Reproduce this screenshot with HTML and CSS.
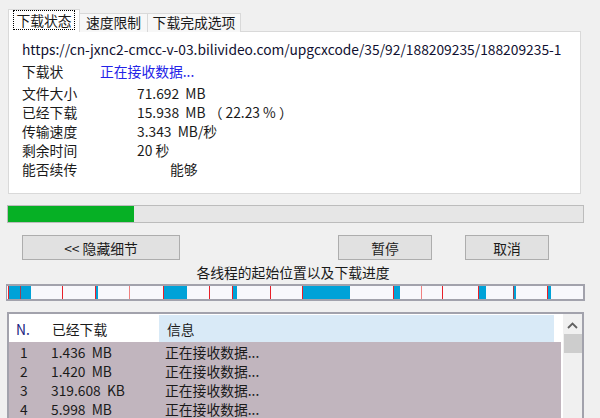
FILE: index.html
```html
<!DOCTYPE html>
<html>
<head>
<meta charset="utf-8">
<link rel="stylesheet" href="styles.css">
</head>
<body>
<div class="win">
  <div class="tabs">
    <div class="tab active"><span class="focus">下载状态</span></div>
    <div class="tab t2">速度限制</div>
    <div class="tab t3">下载完成选项</div>
  </div>
  <div class="panel">
    <div class="url">https://cn-jxnc2-cmcc-v-03.bilivideo.com/upgcxcode/35/92/188209235/188209235-1</div>
    <div class="status"><span class="k">下载状</span><span class="blue">正在接收数据...</span></div>
    <div class="info">
      <div class="row"><span class="k2">文件大小</span><span class="v">71.692  MB</span></div>
      <div class="row"><span class="k2">已经下载</span><span class="v">15.938  MB （ 22.23 % ）</span></div>
      <div class="row"><span class="k2">传输速度</span><span class="v">3.343  MB/秒</span></div>
      <div class="row"><span class="k2">剩余时间</span><span class="v">20 秒</span></div>
      <div class="row"><span class="k2">能否续传</span><span class="v resume">能够</span></div>
    </div>
  </div>
  <div class="progress"><div class="fill"></div></div>
  <div class="buttons">
    <button class="btn hide">&lt;&lt; 隐藏细节</button>
    <button class="btn pause">暂停</button>
    <button class="btn cancel">取消</button>
  </div>
  <div class="caption">各线程的起始位置以及下载进度</div>
  <div class="threads">
    <i class="seg" style="left:1px;width:23px"></i>
    <i class="seg" style="left:89px;width:2px"></i>
    <i class="seg" style="left:157px;width:23px"></i>
    <i class="seg" style="left:226px;width:4px"></i>
    <i class="seg" style="left:295px;width:48px"></i>
    <i class="seg" style="left:386px;width:7px"></i>
    <i class="seg" style="left:472px;width:7px"></i>
    <i class="seg" style="left:507px;width:2px"></i>
    <i class="seg" style="left:541px;width:3px"></i>
    <i class="mark" style="left:1px"></i>
    <i class="mark dark" style="left:13px"></i>
    <i class="mark" style="left:55px"></i>
    <i class="mark" style="left:88px"></i>
    <i class="mark light" style="left:122px"></i>
    <i class="mark" style="left:156px"></i>
    <i class="mark" style="left:202px"></i>
    <i class="mark" style="left:225px"></i>
    <i class="mark" style="left:263px"></i>
    <i class="mark" style="left:295px"></i>
    <i class="mark" style="left:386px"></i>
    <i class="mark light" style="left:414px"></i>
    <i class="mark" style="left:435px"></i>
    <i class="mark" style="left:471px"></i>
    <i class="mark dark" style="left:506px"></i>
    <i class="mark" style="left:540px"></i>
  </div>
  <div class="list">
    <div class="grid">
      <div class="head">
        <div class="c1 hn">N.</div>
        <div class="c2">已经下载</div>
        <div class="c3 hinfo">信息</div>
      </div>
      <div class="body">
        <div class="r"><div class="c1">1</div><div class="c2">1.436  MB</div><div class="c3">正在接收数据...</div></div>
        <div class="r"><div class="c1">2</div><div class="c2">1.420  MB</div><div class="c3">正在接收数据...</div></div>
        <div class="r"><div class="c1">3</div><div class="c2">319.608  KB</div><div class="c3">正在接收数据...</div></div>
        <div class="r"><div class="c1">4</div><div class="c2">5.998  MB</div><div class="c3">正在接收数据...</div></div>
      </div>
    </div>
    <div class="scroll">
      <div class="arrow"><svg width="11" height="7" viewBox="0 0 11 7"><path d="M1 6 L5.5 1.5 L10 6" fill="none" stroke="#606060" stroke-width="1.8"/></svg></div>
      <div class="thumb"></div>
    </div>
  </div>
</div>
</body>
</html>
```
FILE: styles.css
```css
* { box-sizing: border-box; }
html, body { margin: 0; padding: 0; }
body {
  width: 600px; height: 418px; overflow: hidden;
  background: #f0f0f0;
  font-family: "Noto Sans CJK SC", "Noto Sans", sans-serif;
  font-size: 13.8px; color: #1a1a1a;
}
.win { padding-top: 9px; }
.tabs { display: flex; align-items: flex-end; margin-left: 8px; height: 23px; }
.tab {
  height: 19px; line-height: 17px; padding: 0 6px;
  border: 1px solid #d9d9d9; border-bottom: none; background: #f7f7f7;
  margin-left: -1px; white-space: nowrap; text-align: center;
}
.tab.active { width: 72px; height: 23px; line-height: 19px; background: #fff; margin-left: 0; padding: 1px 0 0 0; position: relative; z-index: 1; }
.t2 { width: 69px; padding: 0; }
.t3 { width: 94px; padding: 0; }
.focus { outline: 1px dotted #000; outline-offset: 0; padding: 0 2px; display: inline-block; line-height: 18px; }
.panel {
  margin-left: 8px; width: 573px; height: 163px; margin-top: -1px;
  background: #fff; border: 1px solid #d9d9d9;
  padding: 8px 0 0 13px;
}
.url { line-height: 19px; height: 19px; white-space: nowrap; color: #101030; }
.status { line-height: 19px; margin-top: 3px; display: flex; }
.k { width: 78px; }
.blue { color: #2323e8; }
.info { margin-top: 3px; }
.row { display: flex; line-height: 19px; height: 19px; }
.k2 { width: 115px; }
.v { white-space: pre; color: #1a1a1a; }
.resume { padding-left: 33px; }
.progress {
  margin: 11px 0 0 7px; width: 577px; height: 18px;
  background: #e6e6e6; border: 1px solid #bcbcbc;
}
.fill { width: 126px; height: 100%; background: #06b025; }
.buttons { display: flex; margin-top: 12px; height: 25px; padding-left: 22px; }
.btn {
  font: inherit; color: #1a1a1a; height: 25px; padding: 0;
  background: #e1e1e1; border: 1px solid #adadad; border-radius: 0;
}
.hide { width: 158px; }
.pause { width: 94px; margin-left: 158px; }
.cancel { width: 84px; margin-left: 33px; }
.caption { text-align: center; line-height: 19px; margin-top: 3px; padding-left: 0; width: 586px; }
.threads {
  position: relative; margin: 2px 0 0 6px; width: 579px; height: 17px;
  background: #f8f8fc; border: 1px solid #a2a2ac; border-width: 2px 2px 2px 1px;
}
.seg { position: absolute; top: 0; bottom: 0; background: #00a2d8; }
.mark { position: absolute; top: 0; bottom: 0; width: 1px; background: #e8202a; }
.mark.dark { background: #a04050; }
.mark.light { background: #f08080; }
.list {
  margin: 11px 0 0 7px; width: 577px; height: 120px;
  border: 2px solid #a2a2ac; border-bottom: none;
  background: #fff; display: flex;
}
.grid { width: 554px; }
.head { display: flex; height: 28px; line-height: 28px; padding-top: 1px; background: #fff; }
.c1 { width: 34px; padding-left: 11px; }
.c2 { width: 114px; padding-left: 8px; white-space: pre; }
.c3 { flex: 1; padding-left: 8px; }
.head .c1 { padding-left: 7px; }
.head .c2 { margin-left: 1px; width: 115px; }
.hn { color: #1a237e; }
.hinfo { background: #d9eaf7; margin-right: 7px; }
.body { background: #c1b5be; padding-top: 1px; }
.r { display: flex; line-height: 19px; height: 19px; }
.scroll { width: 19px; margin-left: 2px; background: #f0f0f0; }
.arrow { height: 20px; display: flex; align-items: center; justify-content: center; padding-top: 2px; }
.thumb { margin-top: 0; height: 19px; background: #cdcdcd; margin-left: 1px; }
```
